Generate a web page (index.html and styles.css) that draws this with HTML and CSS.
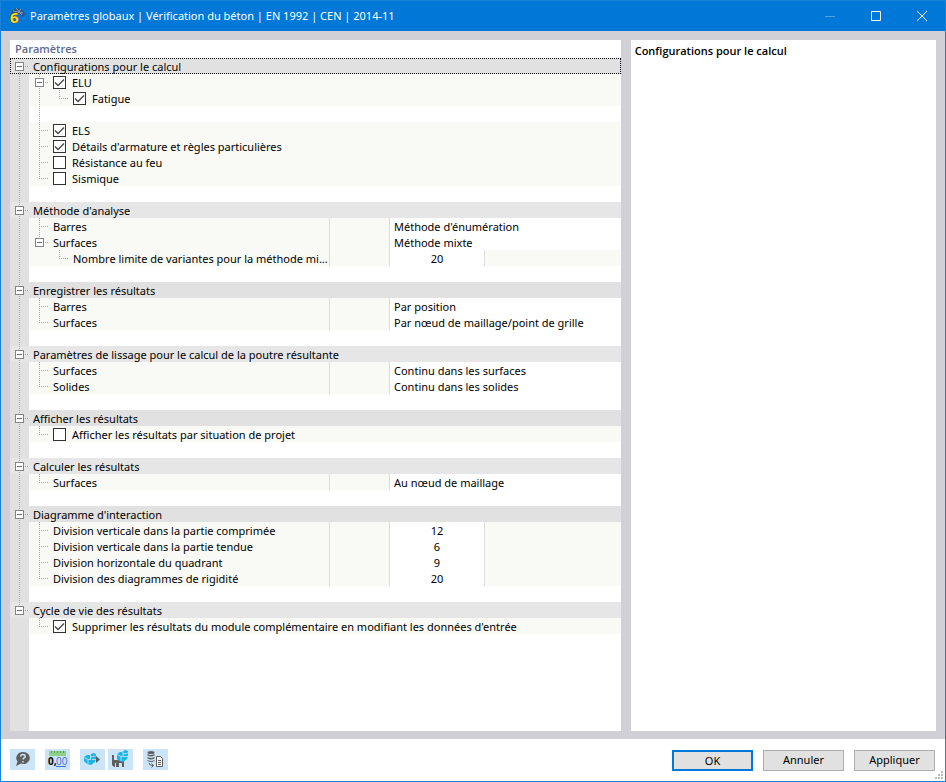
FILE: index.html
```html
<!DOCTYPE html>
<html lang="fr">
  <head>
    <meta charset="UTF-8" />
    <meta name="viewport" content="width=device-width, initial-scale=1.0" />
    <title>Paramètres globaux</title>
    <link rel="stylesheet" href="styles.css">
  </head>
  <body>
    <div class="window">
      <header class="titlebar">
        <svg class="app-icon" width="17" height="20" viewBox="0 0 17 20">
          <path d="M2 6 L7 2 L12 3 L16 8 L14 11 L11 8 L5 8 Z" fill="#35507a" />
          <path d="M4 5 L14 7 M7 2 L13 9 M12 3 L8 8" stroke="#8aa3c2" fill="none" />
          <text x="1" y="17" class="app-digit">6</text>
        </svg>
        <h1>Paramètres globaux | Vérification du béton | EN 1992 | CEN | 2014-11</h1>
        <div class="window-buttons">
          <button class="dim" aria-label="Réduire" disabled><svg width="10" height="10"><path d="M0 5.5H10" /></svg></button>
          <button aria-label="Agrandir"><svg width="10" height="10"><path d="M.5 .5H9.5V9.5H.5Z" /></svg></button>
          <button aria-label="Fermer"><svg width="10" height="10"><path d="M0 0L10 10M10 0L0 10" /></svg></button>
        </div>
      </header>

      <main>
        <section class="panel settings">
          <h2>Paramètres</h2>
          <div class="tree">
            <div class="row group first selected"><span class="gutter"><button class="toggle" aria-label="Réduire le groupe"></button></span><span class="name">Configurations pour le calcul</span></div>
            <div class="row">
              <span class="gutter"></span><span class="branch node more"><button class="toggle" aria-label="Réduire"></button></span>
              <label class="check"><input type="checkbox" checked />ELU</label>
            </div>
            <div class="row">
              <span class="gutter"></span><span class="branch line"></span><span class="branch end"></span>
              <label class="check"><input type="checkbox" checked />Fatigue</label>
            </div>
            <div class="row blank"><span class="gutter"></span><span class="branch line"></span></div>
            <div class="row">
              <span class="gutter"></span><span class="branch tee"></span>
              <label class="check"><input type="checkbox" checked />ELS</label>
            </div>
            <div class="row">
              <span class="gutter"></span><span class="branch tee"></span>
              <label class="check"><input type="checkbox" checked />Détails d'armature et règles particulières</label>
            </div>
            <div class="row">
              <span class="gutter"></span><span class="branch tee"></span>
              <label class="check"><input type="checkbox" />Résistance au feu</label>
            </div>
            <div class="row">
              <span class="gutter"></span><span class="branch end"></span>
              <label class="check"><input type="checkbox" />Sismique</label>
            </div>
            <div class="row blank"><span class="gutter"></span></div>

            <div class="row group light"><span class="gutter"><button class="toggle" aria-label="Réduire le groupe"></button></span><span class="name">Méthode d'analyse</span></div>
            <div class="row">
              <span class="gutter"></span>
              <div class="cell"><span class="branch tee"></span><label class="name" for="analysis-members">Barres</label></div>
              <span class="unit"></span>
              <select id="analysis-members"><option>Méthode d'énumération</option></select>
            </div>
            <div class="row">
              <span class="gutter"></span>
              <div class="cell"><span class="branch node"><button class="toggle" aria-label="Réduire"></button></span><label class="name" for="analysis-surfaces">Surfaces</label></div>
              <span class="unit"></span>
              <select id="analysis-surfaces"><option>Méthode mixte</option></select>
            </div>
            <div class="row">
              <span class="gutter"></span>
              <div class="cell"><span class="branch"></span><span class="branch end"></span><label class="name" for="variants">Nombre limite de variantes pour la méthode mi...</label></div>
              <span class="unit"></span>
              <input class="number" id="variants" type="text" value="20" />
            </div>
            <div class="row blank"><span class="gutter"></span></div>

            <div class="row group"><span class="gutter"><button class="toggle" aria-label="Réduire le groupe"></button></span><span class="name">Enregistrer les résultats</span></div>
            <div class="row">
              <span class="gutter"></span>
              <div class="cell"><span class="branch tee"></span><label class="name" for="save-members">Barres</label></div>
              <span class="unit"></span>
              <select id="save-members"><option>Par position</option></select>
            </div>
            <div class="row">
              <span class="gutter"></span>
              <div class="cell"><span class="branch end"></span><label class="name" for="save-surfaces">Surfaces</label></div>
              <span class="unit"></span>
              <select id="save-surfaces"><option>Par nœud de maillage/point de grille</option></select>
            </div>
            <div class="row blank"><span class="gutter"></span></div>

            <div class="row group light"><span class="gutter"><button class="toggle" aria-label="Réduire le groupe"></button></span><span class="name">Paramètres de lissage pour le calcul de la poutre résultante</span></div>
            <div class="row">
              <span class="gutter"></span>
              <div class="cell"><span class="branch tee"></span><label class="name" for="smooth-surfaces">Surfaces</label></div>
              <span class="unit"></span>
              <select id="smooth-surfaces"><option>Continu dans les surfaces</option></select>
            </div>
            <div class="row">
              <span class="gutter"></span>
              <div class="cell"><span class="branch end"></span><label class="name" for="smooth-solids">Solides</label></div>
              <span class="unit"></span>
              <select id="smooth-solids"><option>Continu dans les solides</option></select>
            </div>
            <div class="row blank"><span class="gutter"></span></div>

            <div class="row group"><span class="gutter"><button class="toggle" aria-label="Réduire le groupe"></button></span><span class="name">Afficher les résultats</span></div>
            <div class="row">
              <span class="gutter"></span><span class="branch end"></span>
              <label class="check"><input type="checkbox" />Afficher les résultats par situation de projet</label>
            </div>
            <div class="row blank"><span class="gutter"></span></div>

            <div class="row group light"><span class="gutter"><button class="toggle" aria-label="Réduire le groupe"></button></span><span class="name">Calculer les résultats</span></div>
            <div class="row">
              <span class="gutter"></span>
              <div class="cell"><span class="branch end"></span><label class="name" for="calc-surfaces">Surfaces</label></div>
              <span class="unit"></span>
              <select id="calc-surfaces"><option>Au nœud de maillage</option></select>
            </div>
            <div class="row blank"><span class="gutter"></span></div>

            <div class="row group"><span class="gutter"><button class="toggle" aria-label="Réduire le groupe"></button></span><span class="name">Diagramme d'interaction</span></div>
            <div class="row">
              <span class="gutter"></span>
              <div class="cell"><span class="branch tee"></span><label class="name" for="div-compression">Division verticale dans la partie comprimée</label></div>
              <span class="unit"></span>
              <input class="number" id="div-compression" type="text" value="12" />
            </div>
            <div class="row">
              <span class="gutter"></span>
              <div class="cell"><span class="branch tee"></span><label class="name" for="div-tension">Division verticale dans la partie tendue</label></div>
              <span class="unit"></span>
              <input class="number" id="div-tension" type="text" value="6" />
            </div>
            <div class="row">
              <span class="gutter"></span>
              <div class="cell"><span class="branch tee"></span><label class="name" for="div-quadrant">Division horizontale du quadrant</label></div>
              <span class="unit"></span>
              <input class="number" id="div-quadrant" type="text" value="9" />
            </div>
            <div class="row">
              <span class="gutter"></span>
              <div class="cell"><span class="branch end"></span><label class="name" for="div-stiffness">Division des diagrammes de rigidité</label></div>
              <span class="unit"></span>
              <input class="number" id="div-stiffness" type="text" value="20" />
            </div>
            <div class="row blank"><span class="gutter"></span></div>

            <div class="row group light last"><span class="gutter"><button class="toggle" aria-label="Réduire le groupe"></button></span><span class="name">Cycle de vie des résultats</span></div>
            <div class="row">
              <span class="gutter off"></span><span class="branch end"></span>
              <label class="check"><input type="checkbox" checked />Supprimer les résultats du module complémentaire en modifiant les données d'entrée</label>
            </div>
          </div>
        </section>

        <aside class="panel info">
          <h2>Configurations pour le calcul</h2>
        </aside>
      </main>

      <footer>
        <div class="tools">
          <button aria-label="Aide">
            <svg width="25" height="21" viewBox="0 0 25 21">
              <path d="M13 3a6.500 6 0 1 1-2 11.600L6 17l1.500-4.500A6.500 6 0 0 1 13 3z" fill="#5f5f5f" />
              <path d="M10.800 7.500q0-2 2.200-2t2.200 1.800q0 1.200-1.200 1.700-.9.500-.9 1.500M13 12v1.600" fill="none" stroke="#cce4f7" stroke-width="1.500" />
            </svg>
          </button>
          <button aria-label="Unités et décimales">
            <svg width="25" height="21" viewBox="0 0 25 21">
              <path d="M4 2h17v5H4z" fill="#8fd18b" />
              <path d="M6.500 2v2M9.500 2v2M12.500 2v2M15.500 2v2M18.500 2v2" stroke="#55a555" />
              <text x="3" y="16" class="digits">0,</text>
              <text x="11" y="16" class="digits blue">00</text>
              <path d="M11 17.500h10" stroke="#3f6fd8" />
            </svg>
          </button>
          <button aria-label="Charger la configuration">
            <svg width="25" height="21" viewBox="0 0 25 21">
              <path d="M4 8l3-2h3l3-2 3 1v5l-1 3-4 3-4-1-3-3z" fill="#19b5e6" />
              <path d="M4 8.500l4 2h3M8 10.500V15M10.500 5v5.500M10.500 8l5-1M12 10.500h4" stroke="#cce4f7" stroke-width=".8" fill="none" />
              <path d="M16 7l4 3.500-4 3.500z" fill="#5f5f5f" />
            </svg>
          </button>
          <button class="joined" aria-label="Enregistrer la configuration">
            <svg width="25" height="21" viewBox="0 0 25 21">
              <path d="M4 6h12v12H6l-2-2z" fill="#5f5f5f" />
              <path d="M6 6h3v4h5v1H6zM7 14h7v4H7z" fill="#cce4f7" />
              <path d="M8 14h3v4H8z" fill="#5f5f5f" />
              <path d="M9 5l3-2h2l3-2 3 1v5l-1 3-4 3-4-1-2-2z" fill="#19b5e6" />
              <path d="M9 5.500l4 2h3M13 7.500V12M15 2v5.500M15 5l5-1M16 7.500h4" stroke="#cce4f7" stroke-width=".8" fill="none" />
            </svg>
          </button>
          <button aria-label="Copier depuis la base de données">
            <svg width="25" height="21" viewBox="0 0 25 21">
              <ellipse cx="8" cy="3.500" rx="3.500" ry="1.500" fill="#5f5f5f" />
              <path d="M4.500 5q3.500 2 7 0v1.500q-3.500 2-7 0zM4.500 8q3.500 2 7 0v1.500q-3.500 2-7 0zM4.500 11q3.500 2 7 0v1q-3.500 2-7 0z" fill="#5f5f5f" />
              <path d="M6 14q0 2.500 4 2.500M8.500 14.500l2 2-2 2" fill="none" stroke="#5f5f5f" />
              <path d="M13.500 7.500h4l2 2v8h-6z" fill="#fff" stroke="#5f5f5f" />
              <path d="M15 11.500h3M15 13.500h3M15 15.500h3" stroke="#5f5f5f" />
            </svg>
          </button>
        </div>
        <div class="actions">
          <button class="default">OK</button>
          <button>Annuler</button>
          <button>Appliquer</button>
        </div>
        <svg class="grip" width="8" height="8" viewBox="0 0 8 8">
          <path d="M6 0h2v2H6zM3 3h2v2H3zM6 3h2v2H6zM0 6h2v2H0zM3 6h2v2H3zM6 6h2v2H6z" fill="#bfbfbf" />
        </svg>
      </footer>
    </div>
  </body>
</html>
```
FILE: styles.css
```css
* {
  box-sizing: border-box;
}

body {
  margin: 0;
  font: 11px/16px "Noto Sans", "Open Sans", sans-serif;
  color: #000;
}

button,
input,
select {
  margin: 0;
  padding: 0;
  border: none;
  border-radius: 0;
  font: inherit;
  color: inherit;
}

.window {
  --dot: #a6a6a6;
  --cream: #f9faf5;
  position: relative;
  display: flex;
  flex-direction: column;
  min-height: 100vh;
  border: 1px solid #1883d7;
  background: #d1d0d6;
}

/* title bar */
.titlebar {
  display: flex;
  align-items: center;
  height: 30px;
  padding-left: 8px;
  background: #0078d7;
  color: #fff;
}

.titlebar h1 {
  flex: 1;
  margin: 0 0 0 4px;
  font-size: 11px;
  font-weight: normal;
}

.app-digit {
  font: bold 15px "Open Sans", sans-serif;
  fill: #ffd42a;
  stroke: #5c4a10;
  stroke-width: 1px;
  paint-order: stroke;
}

.window-buttons {
  display: flex;
}

.window-buttons button {
  display: flex;
  align-items: center;
  justify-content: center;
  width: 46px;
  height: 30px;
  background: none;
}

.window-buttons path {
  fill: none;
  stroke: #fff;
}

.window-buttons .dim {
  opacity: 0.3;
}

/* panels */
main {
  flex: 1;
  display: flex;
  gap: 10px;
  padding: 9px 9px 8px;
}

.panel {
  background: #fff;
}

.panel h2 {
  margin: 0;
  font: 600 11px/18px "Open Sans", sans-serif;
}

.settings {
  flex: 2;
  display: flex;
  flex-direction: column;
  min-width: 0;
}

.settings h2 {
  padding-left: 5px;
  color: #5b6c92;
}

.info {
  flex: 1;
}

.info h2 {
  padding: 2px 4px;
}

/* settings tree */
.tree {
  flex: 1;
  background: linear-gradient(to right, #e1e1e1 19px, #fff 19px);
}

.row {
  display: flex;
  height: 16px;
  background: linear-gradient(to right, #e1e1e1 19px, var(--cream) 19px);
  line-height: 18px;
  white-space: nowrap;
}

.row.blank {
  background: none;
}

.row.group {
  background: #e1e1e1;
}

.row.group.light {
  background: #e6e6e6;
}

.row.selected {
  outline: 1px dotted #000;
  outline-offset: -1px;
}

.gutter,
.branch {
  --down: repeating-linear-gradient(to bottom, var(--dot) 0 1px, transparent 1px 2px);
  --across: repeating-linear-gradient(to right, var(--dot) 0 1px, transparent 1px 2px);
  flex: none;
  display: flex;
  align-items: center;
  background-repeat: no-repeat;
}

.gutter {
  width: 19px;
  padding-left: 5px;
  background-image: var(--down);
  background-size: 1px 100%;
  background-position: 9px 0;
}

/* group rows also get the short stub right of the toggle */
.group .gutter {
  background-image: var(--down), var(--across);
  background-size: 1px 100%, 4px 1px;
  background-position: 9px 0, 15px 8px;
}

.first .gutter {
  background-size: 1px 8px, 4px 1px;
  background-position: 9px 8px, 15px 8px;
}

.last .gutter {
  background-size: 1px 8px, 4px 1px;
}

.gutter.off {
  background: none;
}

.branch {
  width: 20px;
  padding-left: 6px;
}

.branch.line {
  background-image: var(--down);
  background-size: 1px 100%;
  background-position: 10px 0;
}

.branch.tee,
.branch.end,
.branch.node {
  background-image: var(--down), var(--across);
  background-size: 1px 8px, 10px 1px;
  background-position: 10px 0, 10px 8px;
}

.branch.tee,
.branch.more {
  background-size: 1px 16px, 10px 1px;
}

.toggle {
  flex: none;
  width: 9px;
  height: 9px;
  border: 1px solid #848484;
  background: linear-gradient(#6a6a6a, #6a6a6a) center / 5px 1px no-repeat #fff;
}

.name {
  padding-left: 4px;
}

.check {
  display: flex;
  gap: 6px;
  padding-left: 4px;
}

.check input {
  appearance: none;
  width: 13px;
  height: 13px;
  margin-top: 2px;
  border: 1px solid #333;
  background: #fff center no-repeat;
}

.check input:checked {
  background-image: url("data:image/svg+xml,%3Csvg xmlns='http://www.w3.org/2000/svg' width='11' height='11'%3E%3Cpath d='M1 5.500L4 8.500L10 2.500' fill='none' stroke='%23444' stroke-width='1.300'/%3E%3C/svg%3E");
}

.cell {
  flex: none;
  display: flex;
  width: 301px;
  overflow: hidden;
  border-right: 1px solid #dcdcdc;
}

.unit {
  flex: none;
  width: 60px;
  border-right: 1px solid #dcdcdc;
}

.row select {
  appearance: none;
  flex: 1;
  min-width: 0;
  padding-left: 4px;
  background: #fff;
  line-height: 18px;
}

.row .number {
  width: 95px;
  padding-top: 2px;
  border-right: 1px solid #dcdcdc;
  background: #fff;
  text-align: center;
}

/* bottom bar */
footer {
  display: flex;
  align-items: center;
  justify-content: space-between;
  height: 42px;
  padding: 0 10px 0 9px;
  background: #fff;
}

.tools,
.actions {
  display: flex;
  gap: 10px;
}

.tools {
  padding-bottom: 2px;
}

.tools button {
  width: 25px;
  height: 21px;
  background: #cce4f7;
}

.tools .joined {
  margin-left: -7px;
}

.tools svg {
  display: block;
}

.digits {
  font: bold 10px "Open Sans", sans-serif;
}

.digits.blue {
  font-weight: normal;
  fill: #3f6fd8;
}

.actions button {
  width: 81px;
  height: 21px;
  border: 1px solid #adadad;
  background: #e1e1e1;
  line-height: 18px;
}

.actions .default {
  border: 2px solid #0078d7;
}

.grip {
  position: absolute;
  right: 2px;
  bottom: 2px;
}
```
